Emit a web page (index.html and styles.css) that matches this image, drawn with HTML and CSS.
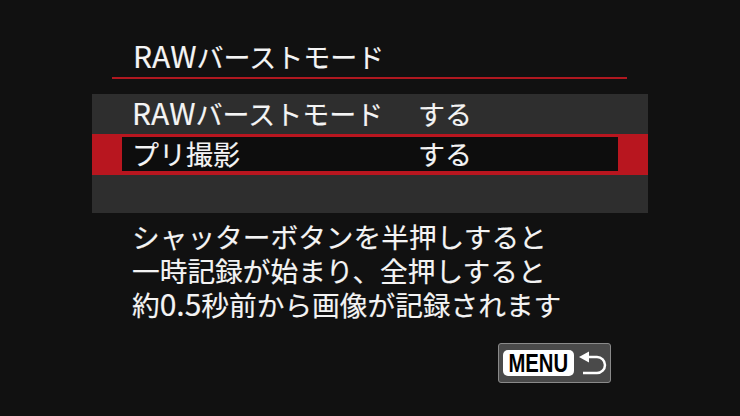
FILE: index.html
```html
<!DOCTYPE html>
<html lang="ja">
<head>
<meta charset="utf-8">
<link rel="stylesheet" href="styles.css">
</head>
<body>
<div class="screen">
  <div class="header"><span class="lat">RAW</span>バーストモード</div>
  <div class="panel">
    <div class="row">
      <span class="label"><span class="lat">RAW</span>バーストモード</span>
      <span class="value">する</span>
    </div>
    <div class="row-sel">
      <div class="sel-inner">
        <span class="label">プリ撮影</span>
        <span class="value">する</span>
      </div>
    </div>
  </div>
  <div class="desc">
    <div>シャッターボタンを半押しすると</div>
    <div>一時記録が始まり、全押しすると</div>
    <div>約<span class="lat">0.5</span>秒前から画像が記録されます</div>
  </div>
  <div class="footer">
    <div class="menu-btn">
      <span class="menu-pill"><span class="menu-txt">MENU</span></span>
      <svg class="ret" width="30" height="26" viewBox="0 0 30 26">
        <polygon points="2,7 12,1.5 12,12.5" fill="#fff"/>
        <path d="M10 7 H20 A8 8 0 0 1 20 23 H6" fill="none" stroke="#fff" stroke-width="2.5"/>
      </svg>
    </div>
  </div>
</div>
</body>
</html>
```
FILE: styles.css
```css
html, body {
  margin: 0;
  padding: 0;
  background: #111111;
}
.screen {
  width: 740px;
  height: 416px;
  overflow: hidden;
  background: #111111;
  color: #f4f4f4;
  font-family: "Noto Sans CJK JP", "Noto Sans", sans-serif;
  font-weight: 400;
  font-size: 27px;
  line-height: 34px;
  -webkit-text-stroke: 0.15px #f4f4f4;
}
.lat {
  font-size: 30px;
  line-height: 1;
}
.header {
  margin-left: 112px;
  width: 494px;
  padding: 40px 0 3px 21px;
  border-bottom: 2px solid #b01820;
}
.panel {
  margin: 15px 0 0 92px;
  width: 556px;
  height: 119px;
  background: #2e2e2e;
}
.row {
  display: flex;
  height: 40px;
  padding-left: 40px;
  padding-top: 3px;
  box-sizing: border-box;
}
.label {
  width: 286px;
}
.row-sel {
  background: #b8161f;
  padding: 3px 30px 4px 30px;
}
.sel-inner {
  display: flex;
  background: #0d0d0d;
  height: 34px;
  box-sizing: border-box;
  padding: 1px 0 0 10px;
  line-height: 32px;
}
.desc {
  margin: 6px 0 0 132px;
  font-size: 27.7px;
  line-height: 34px;
}
.footer {
  display: flex;
  justify-content: flex-end;
  padding-right: 129px;
  margin-top: 22px;
}
.menu-btn {
  display: flex;
  align-items: center;
  gap: 3px;
  width: 113px;
  height: 40px;
  box-sizing: border-box;
  padding-left: 4px;
  background: #4a4a4a;
  border: 1.5px solid #8a8a8a;
  border-radius: 3px;
  -webkit-text-stroke: 0;
}
.menu-pill {
  display: flex;
  align-items: center;
  justify-content: center;
  width: 71px;
  height: 26px;
  background: #ffffff;
  color: #000;
  border-radius: 5px;
}
.menu-txt {
  display: inline-block;
  font-family: "Liberation Sans", sans-serif;
  font-weight: bold;
  font-size: 26px;
  line-height: 26px;
  transform: scaleX(0.78);
}
.ret {
  display: block;
}
```
